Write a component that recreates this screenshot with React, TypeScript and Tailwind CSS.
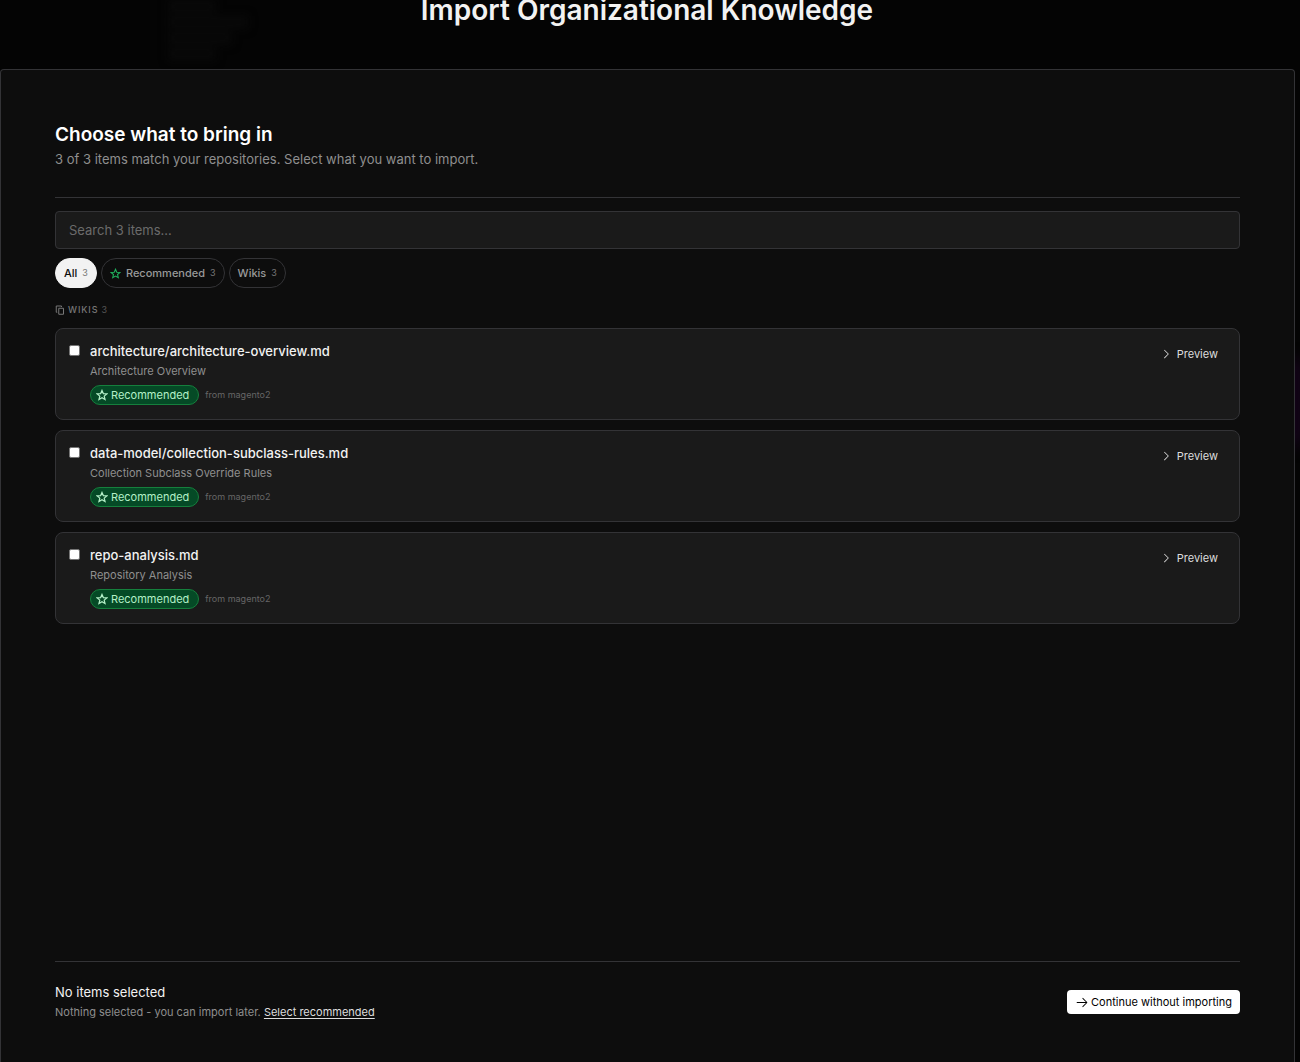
import React, { useState } from 'react'
import clsx from 'clsx'
import { VscArrowRight, VscChevronRight } from 'react-icons/vsc'

interface Item {
  id: string
  path: string
  title: string
  source: string
}

const items: Item[] = [
  {
    id: 'architecture-overview',
    path: 'architecture/architecture-overview.md',
    title: 'Architecture Overview',
    source: 'magento2'
  },
  {
    id: 'collection-subclass-rules',
    path: 'data-model/collection-subclass-rules.md',
    title: 'Collection Subclass Override Rules',
    source: 'magento2'
  },
  {
    id: 'repo-analysis',
    path: 'repo-analysis.md',
    title: 'Repository Analysis',
    source: 'magento2'
  }
]

const filters = [
  { name: 'All', starred: false },
  { name: 'Recommended', starred: true },
  { name: 'Wikis', starred: false }
]

const StarIcon = ({ className }: { className?: string }) => (
  <svg viewBox="0 0 24 24" fill="none" stroke="currentColor" strokeWidth="2.4" aria-hidden="true" className={className}>
    <path d="M12 2.8 14.7 9.2 21.8 9.7 16.4 14.2 18.1 21.2 12 17.5 5.9 21.2 7.6 14.2 2.2 9.7 9.3 9.2Z" />
  </svg>
)

const CopyIcon = ({ className }: { className?: string }) => (
  <svg viewBox="0 0 20 20" fill="none" stroke="currentColor" strokeWidth="2" aria-hidden="true" className={className}>
    <path d="M7.5 6.5H17V18.5H7.5Z" />
    <path d="M4.5 14.5H2.5V2H13V4" />
  </svg>
)

interface CardProps extends Item {
  checked: boolean
  onToggle: () => void
}

const ItemCard: React.FC<CardProps> = ({ id, path, title, source, checked, onToggle }) => {
  return (
    <li className="flex items-start rounded-lg border border-[#333336] bg-[#1a1a1a] px-[13px] pt-3 pb-[14px]">
      <input
        id={id}
        type="checkbox"
        checked={checked}
        onChange={onToggle}
        className="mt-1 size-[11px] shrink-0 appearance-none rounded-[2px] border border-[#767676] bg-white checked:bg-[#1fae5b]"
      />
      <div className="ml-[10px] min-w-0 flex-1">
        <label htmlFor={id} className="block truncate text-[13px] leading-5 font-medium text-[#f2f2f2]">
          {path}
        </label>
        <p className="mt-[2px] text-[11px] leading-4 text-[#8f8f8f]">{title}</p>
        <div className="mt-[6px] flex items-center gap-[6px]">
          <span className="flex h-5 items-center gap-[3px] rounded-full border border-[#15803d] bg-[#054a26] pr-[9px] pl-[5px] text-[11px] text-[#b4f0c8]">
            <StarIcon className="size-3" />
            Recommended
          </span>
          <span className="text-[9px] text-[#666666]">from {source}</span>
        </div>
      </div>
      <button type="button" className="mt-[3px] mr-2 flex items-center gap-1 text-[11px] leading-5 text-[#dddddd]">
        <VscChevronRight className="size-[14px]" />
        Preview
      </button>
    </li>
  )
}

export default function App() {
  const [filter, setFilter] = useState('All')
  const [query, setQuery] = useState('')
  const [selected, setSelected] = useState<string[]>([])

  const toggle = (id: string) =>
    setSelected((prev) => (prev.includes(id) ? prev.filter((item) => item !== id) : [...prev, id]))

  const visible = items.filter((item) => item.path.includes(query.toLowerCase()))

  return (
    <div className="relative flex min-h-screen flex-col overflow-hidden bg-[#040404] font-[Inter,sans-serif] text-[#f2f2f2]">
      {/* dimmed page behind the dialog */}
      <div className="absolute top-0 left-[168px] flex flex-col gap-1 blur-[5px]">
        <div className="h-3 w-12 bg-[#090909]" />
        <div className="h-3 w-20 bg-[#090909]" />
        <div className="h-3 w-16 bg-[#090909]" />
        <div className="h-3 w-12 bg-[#090909]" />
      </div>
      <div className="absolute top-[360px] right-0 h-[85px] w-3 bg-[#1c0224] blur-sm" />

      <header className="relative pr-[6px] pb-[41px]">
        <h1 className="-mt-2 text-center text-[28px] leading-9 font-semibold">Import Organizational Knowledge</h1>
      </header>

      <main className="relative mr-[5px] flex flex-1 flex-col rounded-t-[4px] border border-b-0 border-[#333336] bg-[#0d0d0d] px-[54px] pt-[51px] pb-10">
        <div className="border-b border-[#333336] pb-7">
          <h2 className="text-[19px] leading-7 font-semibold text-white">Choose what to bring in</h2>
          <p className="text-[13px] leading-5 text-[#8f8f8f]">
            3 of 3 items match your repositories. Select what you want to import.
          </p>
        </div>

        <input
          type="search"
          aria-label="Search items"
          placeholder="Search 3 items…"
          value={query}
          onChange={(e) => setQuery(e.target.value)}
          className="mt-[13px] h-[38px] w-full rounded-[4px] border border-[#333336] bg-[#1a1a1a] px-[13px] text-[13px] outline-none placeholder:text-[#6b6b6b]"
        />

        <div className="mt-[9px] flex gap-1">
          {filters.map(({ name, starred }) => (
            <button
              key={name}
              type="button"
              onClick={() => setFilter(name)}
              className={clsx(
                'flex h-[30px] items-center gap-[5px] rounded-full border px-2 text-[11px] font-medium',
                filter === name
                  ? 'border-[#f2f2f2] bg-[#f2f2f2] text-[#0d0d0d]'
                  : 'border-[#333336] text-[#999999]'
              )}
            >
              {starred && <StarIcon className="size-[11px] text-[#1fae5b]" />}
              {name}
              <span className="text-[9px] font-normal text-[#777777]">3</span>
            </button>
          ))}
        </div>

        <h3 className="mt-[14px] flex items-center gap-[3px] text-[9px] leading-4 font-medium tracking-widest text-[#777777]">
          <CopyIcon className="size-[10px]" />
          WIKIS
          <span className="font-normal text-[#555555]">3</span>
        </h3>

        <ul className="mt-[10px] mb-10 flex flex-col gap-[10px]">
          {visible.map((item) => (
            <ItemCard
              key={item.id}
              {...item}
              checked={selected.includes(item.id)}
              onToggle={() => toggle(item.id)}
            />
          ))}
        </ul>

        <footer className="mt-auto flex items-center justify-between border-t border-[#333336] pt-5">
          <div>
            <p className="text-[13px] leading-5">
              {selected.length ? `${selected.length} items selected` : 'No items selected'}
            </p>
            <p className="text-[11px] leading-5 text-[#8f8f8f]">
              Nothing selected - you can import later.{' '}
              <button
                type="button"
                onClick={() => setSelected(items.map((item) => item.id))}
                className="text-[#dddddd] underline underline-offset-2"
              >
                Select recommended
              </button>
            </p>
          </div>
          <button
            type="button"
            className="flex h-6 items-center gap-[2px] rounded-[4px] bg-white px-2 text-[11px] text-black"
          >
            <VscArrowRight className="size-[14px]" />
            Continue without importing
          </button>
        </footer>
      </main>
    </div>
  )
}
